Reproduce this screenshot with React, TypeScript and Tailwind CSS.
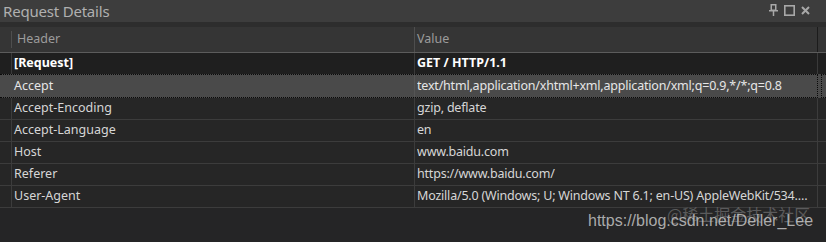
const rows: [string, string][] = [
  ['Accept', 'text/html,application/xhtml+xml,application/xml;q=0.9,*/*;q=0.8'],
  ['Accept-Encoding', 'gzip, deflate'],
  ['Accept-Language', 'en'],
  ['Host', 'www.baidu.com'],
  ['Referer', 'https://www.baidu.com/'],
  ['User-Agent', 'Mozilla/5.0 (Windows; U; Windows NT 6.1; en-US) AppleWebKit/534.7 (KHTML, like Gecko)'],
];

function PinIcon() {
  return (
    <svg width="9" height="12" viewBox="0 0 9 12" fill="none" stroke="currentColor" strokeWidth="1.5">
      <rect x="2.25" y="0.75" width="4.5" height="5.5" />
      <line x1="0" y1="6.75" x2="9" y2="6.75" />
      <line x1="4.5" y1="7" x2="4.5" y2="12" />
    </svg>
  );
}

export default function App() {
  return (
    <div className="relative w-[826px] h-[242px] overflow-hidden bg-[#252526] font-['Noto_Sans',sans-serif] text-[12.5px]">
      {/* title bar */}
      <div className="h-[22px] bg-[#3d3d3d] flex items-center justify-between pl-[3px] pr-[16px]">
        <span className="text-[15px] leading-none text-[#b0b0b0] tracking-[-0.2px]">Request Details</span>
        <div className="flex items-center gap-[6px] text-[#a8a8a8] -mt-[2px]">
          <PinIcon />
          <svg width="11" height="11" viewBox="0 0 11 11" fill="none" stroke="currentColor" strokeWidth="1.6">
            <rect x="0.8" y="0.8" width="9.4" height="9.4" />
          </svg>
          <svg width="9" height="9" viewBox="0 0 9 9" fill="none" stroke="currentColor" strokeWidth="2">
            <path d="M1 1L8 8M8 1L1 8" />
          </svg>
        </div>
      </div>
      <div className="h-[5px] bg-[#2d2d2d]" />

      {/* column header */}
      <div className="flex h-[26px] bg-[#353535] border-b border-[#5c5c5c] text-[#9c9c9c]">
        <div className="w-[12px] border-r border-[#4e4e4e] my-[4px]" />
        <div className="w-[403px] border-r border-[#4e4e4e] pl-[5px] flex items-center">Header</div>
        <div className="w-[403px] border-r border-[#1c1c1c] pl-[2px] flex items-center">Value</div>
        <div className="flex-1" />
      </div>

      {/* [Request] row */}
      <div className="flex h-[21px] bg-[#1f1f1f] text-white font-bold">
        <div className="w-[12px] border-r border-[#3a3a3a]" />
        <div className="w-[403px] border-r border-[#3a3a3a] pl-[2px] flex items-center">[Request]</div>
        <div className="w-[403px] border-r border-[#3a3a3a] pl-[2px] flex items-center">GET / HTTP/1.1</div>
        <div className="flex-1" />
      </div>

      {rows.map(([k, v], i) => {
        const sel = i === 0;
        return (
          <div
            key={k}
            className={sel ? 'flex h-[24px] bg-[#4a4a4a] text-[#e6e6e6]' : 'flex h-[22px] bg-[#262626] text-[#d6d6d6] border-b border-[#3c3c3c]'}
          >
            <div className={sel ? 'flex w-[818px] border border-l-0 border-dotted border-[#0a0a0a]' : 'flex w-[818px] border-r border-[#3c3c3c]'}>
              <div className={sel ? 'w-[12px] border-r border-[#4a4a4a]' : 'w-[12px] border-r border-[#3c3c3c]'} />
              <div className={sel ? 'w-[403px] border-r border-[#555555] pl-[2px] flex items-center' : 'w-[403px] border-r border-[#3c3c3c] pl-[2px] flex items-center'}>{k}</div>
              <div className="flex-1 min-w-0 pl-[2px] flex items-center whitespace-nowrap overflow-hidden tracking-[-0.2px]">
                <span className="truncate pr-[4px]">{v}</span>
              </div>
            </div>
            <div className={sel ? 'flex-1 ml-[3px] border border-r-0 border-dotted border-[#0a0a0a]' : 'flex-1'} />
          </div>
        );
      })}

      {/* watermark */}
      <div className="absolute left-[667px] top-[206px] text-[16px] leading-none text-[#ffffff]/25 font-['Noto_Sans_CJK_SC',sans-serif]">@稀土掘金技术社区</div>
      <div className="absolute left-[588px] top-[209px] text-[16px] leading-[24px] text-[#c4c4c4]/85 font-['Liberation_Sans',sans-serif]">https://blog.csdn.net/Deller_Lee</div>
    </div>
  );
}
